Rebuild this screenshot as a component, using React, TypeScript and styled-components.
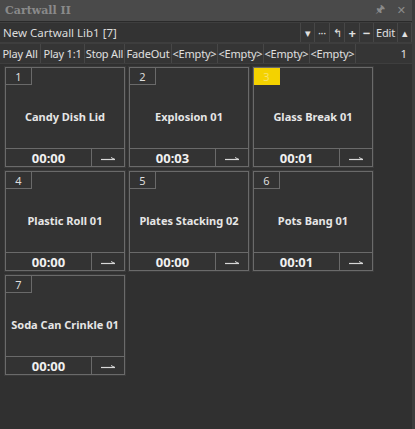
import styled, { createGlobalStyle } from "styled-components";

const Global = createGlobalStyle`
  html, body { margin: 0; padding: 0; background: #2e2e2e; }
  body { font-family: "Noto Sans", "Liberation Sans", sans-serif; }
`;

const Panel = styled.div`
  width: 415px;
  height: 429px;
  background: #303030;
  display: flex;
  flex-direction: column;
  box-sizing: border-box;
  border-right: 3px solid #3c3c3c;
  overflow: hidden;
`;

const TitleBar = styled.div`
  height: 21px;
  background: #4a4a4a;
  display: flex;
  align-items: center;
  padding: 0 6px 0 5px;
  border-bottom: 1px solid #2a2a2a;
`;

const Title = styled.span`
  flex: 1;
  font-family: "DejaVu Serif", "Liberation Serif", serif;
  font-weight: bold;
  font-size: 11px;
  color: #8a8a8a;
`;

const TitleIcon = styled.span`
  color: #8a8a8a;
  font-size: 11px;
  margin-left: 12px;
  font-family: "DejaVu Sans", sans-serif;
`;

const Row = styled.div`
  height: 19px;
  display: flex;
  align-items: stretch;
  border-top: 1px solid #3e3e3e;
  border-bottom: 1px solid #3e3e3e;
  background: #353535;
`;

const Combo = styled.div`
  flex: 1;
  display: flex;
  align-items: center;
  padding-left: 3px;
  font-size: 11.5px;
  color: #dcdcdc;
  background: #333;
  border-right: 1px solid #474747;
`;

const Btn = styled.div<{ $w: number; $bold?: boolean }>`
  width: ${(p) => p.$w}px;
  flex: none;
  display: flex;
  align-items: center;
  justify-content: center;
  font-size: ${(p) => (p.$bold ? "13px" : "11px")};
  font-weight: ${(p) => (p.$bold ? "bold" : "normal")};
  color: #e0e0e0;
  border-right: 1px solid #474747;
  white-space: nowrap;
  box-sizing: border-box;
  letter-spacing: -0.2px;
`;

const Spacer = styled.div`
  flex: 1;
`;

const Page = styled.div`
  font-size: 11.5px;
  color: #e0e0e0;
  display: flex;
  align-items: center;
  padding: 0 5px 0 0;
`;

const Grid = styled.div`
  display: grid;
  grid-template-columns: repeat(3, 120px);
  grid-auto-rows: 100px;
  gap: 4px;
  padding: 3px 0 0 5px;
`;

const Cell = styled.div`
  border: 1px solid #6a6a6a;
  background: #333;
  display: flex;
  flex-direction: column;
  box-sizing: border-box;
  box-shadow: 0 0 0 1px #3a3a3a;
`;

const NumBox = styled.div<{ $active?: boolean }>`
  width: 26px;
  height: 17px;
  border: 1px solid ${(p) => (p.$active ? "#f5d000" : "#6a6a6a")};
  border-top: none;
  border-left: none;
  background: ${(p) => (p.$active ? "#f4d200" : "transparent")};
  color: ${(p) => (p.$active ? "#f7e26a" : "#dedede")};
  font-size: 11px;
  display: flex;
  align-items: center;
  justify-content: center;
  box-sizing: border-box;
`;

const Name = styled.div`
  flex: 1;
  display: flex;
  align-items: center;
  justify-content: center;
  font-weight: bold;
  font-size: 11px;
  color: #e6e6e6;
  white-space: nowrap;
`;

const Bottom = styled.div`
  height: 17px;
  display: flex;
  border-top: 1px solid #6a6a6a;
`;

const Time = styled.div`
  flex: 1;
  display: flex;
  align-items: center;
  justify-content: center;
  font-weight: bold;
  font-size: 13px;
  color: #f0f0f0;
  border-right: 1px solid #6a6a6a;
`;

const Arrow = styled.div`
  width: 32px;
  display: flex;
  align-items: center;
  justify-content: center;
`;

const carts = [
  { n: 1, name: "Candy Dish Lid", t: "00:00" },
  { n: 2, name: "Explosion 01", t: "00:03" },
  { n: 3, name: "Glass Break 01", t: "00:01", active: true },
  { n: 4, name: "Plastic Roll 01", t: "00:00" },
  { n: 5, name: "Plates Stacking 02", t: "00:00" },
  { n: 6, name: "Pots Bang 01", t: "00:01" },
  { n: 7, name: "Soda Can Crinkle 01", t: "00:00" },
];

const ArrowIcon = () => (
  <svg width="20" height="6" viewBox="0 0 20 6">
    <path d="M3 4.5 H17" stroke="#d8d8d8" strokeWidth="1.2" />
    <path d="M13 2.5 L17 4.5" stroke="#d8d8d8" strokeWidth="1" />
  </svg>
);

const quick = [
  { label: "Play All", w: 41 },
  { label: "Play 1:1", w: 44 },
  { label: "Stop All", w: 40 },
  { label: "FadeOut", w: 47 },
  { label: "<Empty>", w: 46 },
  { label: "<Empty>", w: 46 },
  { label: "<Empty>", w: 46 },
  { label: "<Empty>", w: 46 },
];

export default function App() {
  return (
    <>
      <Global />
      <Panel>
        <TitleBar>
          <Title>Cartwall II</Title>
          <TitleIcon>&#x1F588;</TitleIcon>
          <TitleIcon>✕</TitleIcon>
        </TitleBar>
        <Row>
          <Combo>New Cartwall Lib1 [7]</Combo>
          <Btn $w={14}>▾</Btn>
          <Btn $w={15}>···</Btn>
          <Btn $w={15}>↰</Btn>
          <Btn $w={15} $bold>+</Btn>
          <Btn $w={14} $bold>−</Btn>
          <Btn $w={24}>Edit</Btn>
          <Btn $w={14}>▴</Btn>
        </Row>
        <Row>
          {quick.map((q, i) => (
            <Btn key={i} $w={q.w}>
              {q.label}
            </Btn>
          ))}
          <Spacer />
          <Page>1</Page>
        </Row>
        <Grid>
          {carts.map((c) => (
            <Cell key={c.n}>
              <NumBox $active={c.active}>{c.n}</NumBox>
              <Name>{c.name}</Name>
              <Bottom>
                <Time>{c.t}</Time>
                <Arrow>
                  <ArrowIcon />
                </Arrow>
              </Bottom>
            </Cell>
          ))}
        </Grid>
      </Panel>
    </>
  );
}
